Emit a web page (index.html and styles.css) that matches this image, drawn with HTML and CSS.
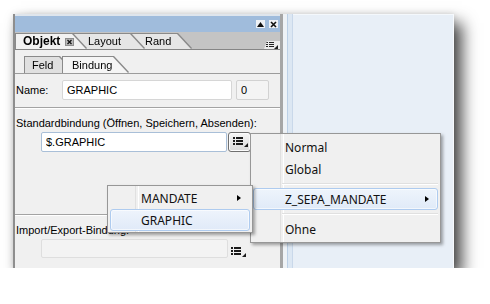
FILE: index.html
```html
<!DOCTYPE html>
<html lang="de">
<head>
  <meta charset="UTF-8" />
  <title>Objekt – Bindung</title>
  <link rel="stylesheet" href="styles.css">
</head>
<body>
  <div class="shot">
    <div class="panel">
      <div class="titlebar">
        <span class="tb-btn">
          <svg width="7" height="5" viewBox="0 0 7 5"><path d="M3.5 0L7 5H0z" fill="#111"/></svg>
        </span>
        <span class="tb-btn">
          <svg width="7" height="7" viewBox="0 0 7 7"><path d="M1 1l5 5M6 1L1 6" stroke="#111" stroke-width="1.6"/></svg>
        </span>
      </div>

      <div class="tabstrip">
        <div class="tab tab-active t-objekt">
          <div class="face">
            <b>Objekt</b>
            <span class="tab-close">
              <svg width="9" height="8" viewBox="0 0 9 8"><rect x="0.5" y="0.5" width="8" height="7" fill="#b9b9b9" stroke="#8d8d8d"/><path d="M2.5 2l4 4M6.5 2l-4 4" stroke="#111" stroke-width="1.3"/></svg>
            </span>
          </div>
        </div>
        <div class="tab t-layout"><div class="face">Layout</div></div>
        <div class="tab t-rand"><div class="face">Rand</div></div>
        <div class="strip-menu">
          <svg width="12" height="7" viewBox="0 0 12 7"><g fill="#222"><rect x="0" y="0" width="2" height="1"/><rect x="3" y="0" width="5" height="1"/><rect x="0" y="2" width="2" height="1"/><rect x="3" y="2" width="5" height="1"/><rect x="0" y="4" width="2" height="1"/><rect x="3" y="4" width="5" height="1"/><path d="M12 3v4H8z"/></g></svg>
        </div>
      </div>

      <div class="subtabs">
        <div class="tab t-feld"><div class="face">Feld</div></div>
        <div class="tab tab-active t-bindung"><div class="face">Bindung</div></div>
      </div>

      <div class="form">
        <div class="name-row">
          <label class="lbl">Name:</label>
          <input class="field field-name" type="text" value="GRAPHIC" readonly>
          <input class="field field-num" type="text" value="0" readonly>
        </div>

        <div class="sep"></div>

        <div class="caption">Standardbindung (Öffnen, Speichern, Absenden):</div>
        <div class="bind-row">
          <input class="field field-bind" type="text" value="$.GRAPHIC" readonly>
          <button class="pick">
            <svg width="16" height="12" viewBox="0 0 16 12"><g fill="#1a1a1a"><rect x="0" y="1" width="2" height="2"/><rect x="3" y="1" width="7" height="2"/><rect x="0" y="4" width="2" height="2"/><rect x="3" y="4" width="7" height="2"/><rect x="0" y="7" width="2" height="2"/><rect x="3" y="7" width="7" height="2"/><path d="M15 7v4h-4z"/></g></svg>
          </button>
        </div>

        <div class="sep sep-low"></div>

        <div class="caption">Import/Export-Bindung:</div>
        <div class="bind-row">
          <input class="field field-off" type="text" value="" readonly>
          <span class="pick-flat">
            <svg width="16" height="12" viewBox="0 0 16 12"><g fill="#1a1a1a"><rect x="0" y="1" width="2" height="2"/><rect x="3" y="1" width="7" height="2"/><rect x="0" y="4" width="2" height="2"/><rect x="3" y="4" width="7" height="2"/><rect x="0" y="7" width="2" height="2"/><rect x="3" y="7" width="7" height="2"/><path d="M15 7v4h-4z"/></g></svg>
          </span>
        </div>
      </div>
    </div>

    <div class="splitter"></div>
    <div class="canvas"></div>
  </div>

  <!-- Kontextmenüs der Bindungsauswahl -->
  <div class="menu menu-main">
    <div class="item">Normal</div>
    <div class="item">Global</div>
    <div class="menu-sep"></div>
    <div class="item item-hot">Z_SEPA_MANDATE<span class="arrow"></span></div>
    <div class="menu-sep"></div>
    <div class="item">Ohne</div>
  </div>

  <div class="menu menu-sub">
    <div class="item">MANDATE<span class="arrow"></span></div>
    <div class="item item-hot">GRAPHIC</div>
  </div>
</body>
</html>
```

FILE: styles.css
```css
* {
  box-sizing: border-box;
}

body {
  margin: 0;
  padding: 14px 0 0 13px;
  background-color: #fff;
  font-family: "Liberation Sans", Arial, sans-serif;
  font-size: 11px;
  color: #000;
}

.shot {
  display: flex;
  width: 441px;
  height: 254px;
  box-shadow: 8px 9px 15px rgba(0,0,0,0.72), 0 0 6px rgba(0,0,0,0.12);
}

/* linkes Eigenschaftsfenster */

.panel {
  width: 270px;
  display: flex;
  flex-direction: column;
  background-color: #f0f0f0;
  border-left: 2px solid #8e8e8e;
  border-right: 3px solid #a6a6a6;
}

.titlebar {
  height: 18px;
  display: flex;
  justify-content: flex-end;
  align-items: center;
  gap: 4px;
  padding-right: 2px;
  background-color: #a0bcdc;
  border-top: 2px solid #dfe5ec;
}

.tb-btn {
  width: 9px;
  height: 8px;
  display: flex;
  align-items: center;
  justify-content: center;
  background-color: #eef1f5;
}

.tabstrip {
  height: 18px;
  display: flex;
  align-items: flex-end;
  padding-left: 1px;
  background-color: #c4c4c4;
  border-bottom: 1px solid #858585;
}

.tab {
  position: relative;
  filter: drop-shadow(-1px 0 0 #8a8a8a) drop-shadow(1px 0 0 #8a8a8a) drop-shadow(0 -1px 0 #8a8a8a);
}

.face {
  height: 15px;
  display: flex;
  align-items: center;
  gap: 5px;
  line-height: 15px;
  background-color: #e6e6e6;
  clip-path: polygon(0 0, calc(100% - 14px) 0, 100% 100%, 0 100%);
}

.tab-active .face {
  background-color: #f2f2f2;
}

.t-objekt {
  z-index: 3;
}

.t-objekt .face {
  width: 70px;
  padding-left: 7px;
}

.t-objekt b {
  font-size: 12px;
}

.tab-close {
  display: flex;
}

.t-layout {
  z-index: 2;
  margin-left: -14px;
}

.t-layout .face {
  width: 72px;
  padding-left: 16px;
}

.t-rand {
  z-index: 1;
  margin-left: -14px;
}

.t-rand .face {
  width: 61px;
  padding-left: 15px;
}

.strip-menu {
  margin-left: auto;
  width: 16px;
  height: 8px;
  display: flex;
  align-items: center;
  justify-content: center;
  background-color: #ececec;
  clip-path: polygon(3px 0, 100% 0, 100% 100%, 0 100%);
}

.subtabs {
  height: 24px;
  display: flex;
  align-items: flex-end;
  padding-left: 10px;
  border-bottom: 1px solid #9c9c9c;
}

.subtabs .face {
  height: 16px;
  clip-path: polygon(0 0, calc(100% - 15px) 0, 100% 100%, 0 100%);
}

.t-feld .face {
  width: 49px;
  padding-left: 7px;
  background-color: #e0e0e0;
}

.t-bindung {
  z-index: 2;
  margin-left: -11px;
}

.t-bindung .face {
  width: 65px;
  padding-left: 9px;
  background-color: #f5f5f5;
}

/* Formularbereich */

.form {
  padding-left: 1px;
}

.name-row {
  display: flex;
  align-items: center;
  margin-top: 6px;
}

.lbl {
  width: 46px;
}

.field {
  height: 20px;
  padding: 0 4px;
  font: inherit;
  color: #000;
  background-color: #fff;
  border: 1px solid #d6d6d6;
  border-radius: 2px;
  outline: none;
}

.field-name {
  width: 170px;
}

.field-num {
  width: 33px;
  margin-left: 4px;
  background-color: #f4f4f4;
  border-color: #d2d2d2;
}

.sep {
  margin-top: 7px;
  margin-left: -1px;
  border-top: 1px solid #a3a3a3;
  border-bottom: 1px solid #fff;
}

.sep-low {
  margin-top: 62px;
}

.caption {
  margin-top: 8px;
  line-height: 13px;
}

.bind-row {
  display: flex;
  align-items: center;
  margin-top: 2px;
  padding-left: 25px;
}

.field-bind {
  width: 186px;
  border-color: #a9bfd8;
}

.pick {
  width: 23px;
  height: 20px;
  margin-left: 1px;
  padding: 0 0 0 2px;
  display: flex;
  align-items: center;
  justify-content: center;
  background: linear-gradient(#f6f6f6, #dadada);
  border: 1px solid #707070;
  border-radius: 3px;
  box-shadow: inset 0 0 0 1px #fcfcfc;
}

.field-off {
  width: 187px;
  height: 19px;
  background-color: #f3f3f3;
  border-color: #dedede;
}

.pick-flat {
  display: flex;
  margin: 6px 0 0 3px;
}

.splitter {
  width: 10px;
  background: linear-gradient(to right, #eef2f6 0 4px, #bcd0e6 4px 5px, #dce7f3 5px 9px, #c9d8ea 9px 10px);
}

.canvas {
  flex: 1;
  background-color: #e8eff7;
  border-top: 1px solid #f4f8fc;
  border-right: 1px solid #f7fafd;
}

/* Menüs */

.menu {
  position: absolute;
  font-family: "Noto Sans", "Liberation Sans", sans-serif;
  font-size: 12px;
  color: #111;
  background-color: #f0f0f0;
  border: 1px solid #979797;
  box-shadow: 2px 2px 3px rgba(0,0,0,0.35);
}

.menu::before {
  content: "";
  position: absolute;
  top: 0;
  bottom: 0;
  width: 2px;
  border-left: 1px solid #e0e0e0;
  border-right: 1px solid #fff;
}

.menu-main {
  left: 250px;
  top: 133px;
  width: 191px;
  padding: 2px;
}

.menu-main::before {
  left: 29px;
}

.menu-sub {
  left: 107px;
  top: 185px;
  width: 146px;
  padding: 1px 2px;
}

.menu-sub::before {
  left: 27px;
}

.item {
  position: relative;
  height: 22px;
  display: flex;
  align-items: center;
  padding: 0 8px 0 31px;
  border: 1px solid transparent;
  border-radius: 3px;
}

.menu-sub .item {
  padding-left: 30px;
}

.item-hot {
  background: linear-gradient(#eef4fc, #e0eaf8);
  border-color: #aecbef;
  box-shadow: inset 0 0 0 1px rgba(255,255,255,0.6);
}

.arrow {
  margin-left: auto;
  width: 0;
  height: 0;
  border-top: 3.5px solid transparent;
  border-bottom: 3.5px solid transparent;
  border-left: 4px solid #000;
}

.menu-sep {
  position: relative;
  height: 8px;
  margin-left: 29px;
}

.menu-sep::after {
  content: "";
  position: absolute;
  left: 0;
  right: 0;
  top: 3px;
  border-top: 1px solid #e0e0e0;
  border-bottom: 1px solid #fff;
}
```
